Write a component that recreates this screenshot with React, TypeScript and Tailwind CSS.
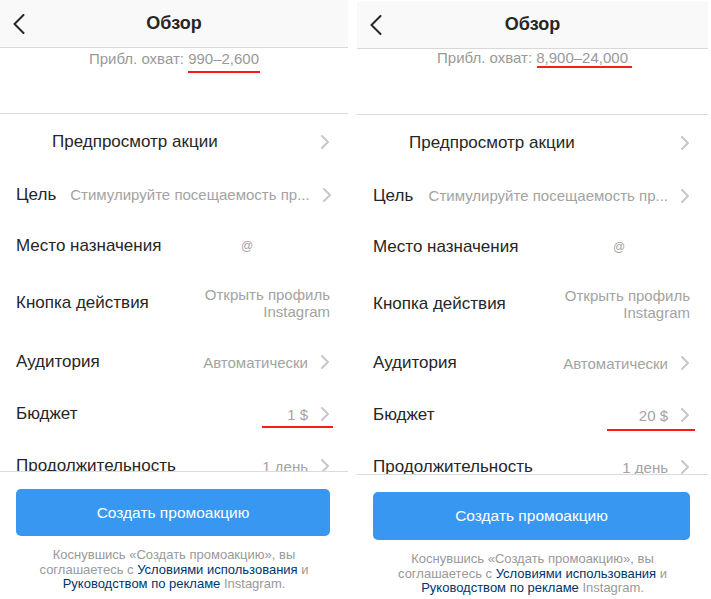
import type { ReactNode } from 'react'

interface ScreenProps {
  width: number
  topPad: number
  reachPad: number
  reach: string
  reachLine: { left: number; top: number; width: number }
  budget: string
  budgetLine: { left: number; top: number; width: number }
  atLeft: number
  listEnd: number
  buttonH: number
}

function Chevron() {
  return (
    <svg width="10" height="16" viewBox="0 0 10 16" className="ml-[12px] shrink-0">
      <path d="M2 2l6 6-6 6" fill="none" stroke="#c7c7cc" strokeWidth="2" strokeLinecap="round" strokeLinejoin="round" />
    </svg>
  )
}

function Row({ h, label, children, chevron = true, indent = 16 }: {
  h: number
  label: string
  children?: ReactNode
  chevron?: boolean
  indent?: number
}) {
  return (
    <div className="flex shrink-0 items-center pr-[18px]" style={{ height: h, paddingLeft: indent }}>
      <span className="whitespace-nowrap text-[17px] text-[#262626]">{label}</span>
      <div className="ml-auto flex items-center text-right text-[15px] leading-[17px] text-[#a3a3a3]">
        {children}
      </div>
      {chevron && <Chevron />}
    </div>
  )
}

function Screen({ width, topPad, reachPad, reach, reachLine, budget, budgetLine, atLeft, listEnd, buttonH }: ScreenProps) {
  return (
    <div
      className="relative flex h-[599px] shrink-0 flex-col bg-white font-['Liberation_Sans',Arial,sans-serif]"
      style={{ width, paddingTop: topPad }}
    >
      <div className="grid h-[48px] shrink-0 grid-cols-[48px_1fr_48px] items-center border-b border-[#d8d8d8] bg-[#f9f9f9]">
        <svg width="12" height="20" viewBox="0 0 12 20" className="ml-[13px]">
          <path d="M10.5 1L1.5 10l9 9" fill="none" stroke="#262626" strokeWidth="2" strokeLinecap="round" strokeLinejoin="round" />
        </svg>
        <span className="text-center text-[18px] font-bold text-[#262626]">Обзор</span>
        <span />
      </div>

      <div
        className="h-[66px] shrink-0 border-b border-[#dbdbdb] text-center text-[15px] leading-[17px] text-[#999]"
        style={{ paddingTop: reachPad }}
      >
        Прибл. охват: {reach}
      </div>

      <div className="flex flex-col overflow-hidden" style={{ height: listEnd }}>
        <Row h={55} label="Предпросмотр акции" indent={52} />
        <Row h={51} label="Цель">
          <span className="ml-[14px] whitespace-nowrap">Стимулируйте посещаемость пр...</span>
        </Row>
        <div className="flex h-[52px] shrink-0 items-center pl-4">
          <span className="text-[17px] text-[#262626]">Место назначения</span>
          <span className="absolute text-[12px] text-[#a3a3a3]" style={{ left: atLeft }}>@</span>
        </div>
        <Row h={62} label="Кнопка действия" chevron={false}>
          <span>
            Открыть профиль
            <br />
            Instagram
          </span>
        </Row>
        <Row h={56} label="Аудитория">Автоматически</Row>
        <Row h={48} label="Бюджет">{budget}</Row>
        <Row h={56} label="Продолжительность">1 день</Row>
      </div>

      <div className="flex flex-1 flex-col border-t border-[#dbdbdb] bg-white px-4 pt-[17px]">
        <button
          type="button"
          className="mr-[2px] shrink-0 rounded-[5px] bg-[#3897f0] text-[15.5px] text-white"
          style={{ height: buttonH }}
        >
          Создать промоакцию
        </button>
        <p className="mt-[12px] text-center text-[13px] leading-[14.5px] text-[#999]">
          Коснувшись «Создать промоакцию», вы
          <br />
          соглашаетесь с <span className="text-[#003569]">Условиями использования</span> и
          <br />
          <span className="text-[#003569]">Руководством по рекламе</span> Instagram.
        </p>
      </div>

      <div
        className="absolute h-[2px] bg-[#ff1a1a]"
        style={{ left: reachLine.left, top: reachLine.top, width: reachLine.width }}
      />
      <div
        className="absolute h-[2px] bg-[#ff1a1a]"
        style={{ left: budgetLine.left, top: budgetLine.top, width: budgetLine.width }}
      />
    </div>
  )
}

export default function App() {
  return (
    <div className="flex h-[599px] w-[711px] gap-[9px] overflow-hidden bg-white">
      <Screen
        width={348}
        topPad={0}
        reachPad={2}
        reach="990–2,600"
        reachLine={{ left: 188, top: 71, width: 72 }}
        budget="1 $"
        budgetLine={{ left: 262, top: 426, width: 71 }}
        atLeft={241}
        listEnd={357}
        buttonH={47}
      />
      <Screen
        width={351}
        topPad={1}
        reachPad={0}
        reach="8,900–24,000"
        reachLine={{ left: 180, top: 66, width: 95 }}
        budget="20 $"
        budgetLine={{ left: 250, top: 429, width: 88 }}
        atLeft={256}
        listEnd={359}
        buttonH={48}
      />
    </div>
  )
}
